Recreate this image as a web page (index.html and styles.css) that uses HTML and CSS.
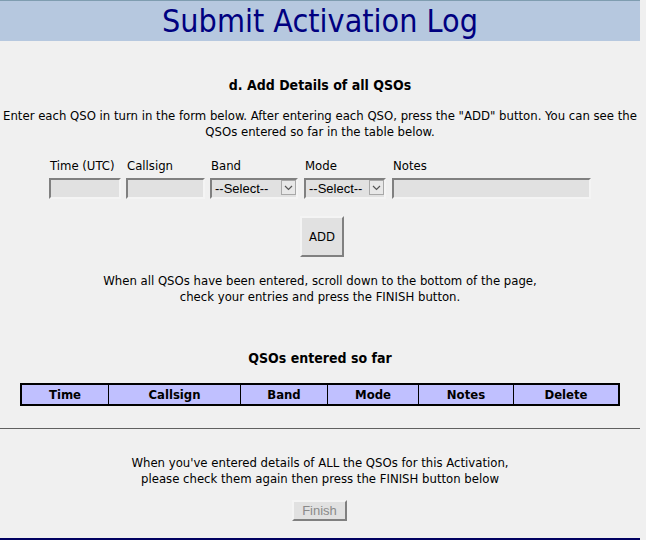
FILE: index.html
```html
<!DOCTYPE html>
<html lang="en">
<head>
    <meta charset="UTF-8">
    <title>Submit Activation Log</title>
    <link rel="stylesheet" href="styles.css">
</head>
<body>
<div class="page">

    <div class="banner">
        <h1>Submit Activation Log</h1>
    </div>

    <h3 class="step">d. Add Details of all QSOs</h3>
    <p class="intro">Enter each QSO in turn in the form below. After entering each QSO, press the "ADD" button. You can see the QSOs entered so far in the table below.</p>

    <form id="qsoForm" class="qso-form">
        <div class="fields">
            <div class="field f-time">
                <label for="time">Time (UTC)</label>
                <input type="text" id="time" name="time">
            </div>
            <div class="field f-call">
                <label for="callsign">Callsign</label>
                <input type="text" id="callsign" name="callsign">
            </div>
            <div class="field f-band">
                <label for="band">Band</label>
                <span class="select-wrap">
                    <select id="band" name="band">
                        <option>--Select--</option>
                    </select>
                    <span class="arrow"><svg width="9" height="6" viewBox="0 0 9 6"><path d="M1 1 L4.5 4.5 L8 1" fill="none" stroke="#555" stroke-width="1.2"/></svg></span>
                </span>
            </div>
            <div class="field f-mode">
                <label for="mode">Mode</label>
                <span class="select-wrap">
                    <select id="mode" name="mode">
                        <option>--Select--</option>
                    </select>
                    <span class="arrow"><svg width="9" height="6" viewBox="0 0 9 6"><path d="M1 1 L4.5 4.5 L8 1" fill="none" stroke="#555" stroke-width="1.2"/></svg></span>
                </span>
            </div>
            <div class="field f-notes">
                <label for="notes">Notes</label>
                <input type="text" id="notes" name="notes">
            </div>
        </div>
        <button type="button" class="add-btn">ADD</button>
    </form>

    <p class="hint">When all QSOs have been entered, scroll down to the bottom of the page,<br>check your entries and press the FINISH button.</p>

    <h3 class="so-far">QSOs entered so far</h3>

    <table class="qso-table">
        <tr>
            <th class="c-time">Time</th>
            <th class="c-call">Callsign</th>
            <th class="c-band">Band</th>
            <th class="c-mode">Mode</th>
            <th class="c-notes">Notes</th>
            <th class="c-del">Delete</th>
        </tr>
    </table>

    <hr>

    <p class="finish-note">When you've entered details of ALL the QSOs for this Activation,<br>please check them again then press the FINISH button below</p>

    <div class="finish-row">
        <button type="button" class="finish-btn" disabled>Finish</button>
    </div>

    <div class="footer-line"></div>
</div>
</body>
</html>
```

FILE: styles.css
```css
html, body {
    margin: 0;
    padding: 0;
    background-color: #f0f0f0;
}

body {
    font-family: "DejaVu Sans Condensed", "DejaVu Sans", sans-serif;
    font-size: 13px;
    color: #000;
}

.page {
    width: 640px;
    height: 540px;
    overflow: hidden;
}

.banner {
    background-color: #b6c8df;
    border-top: 1px solid #7f9db0;
    height: 40px;
}

h1 {
    margin: 0;
    text-align: center;
    font-weight: normal;
    font-size: 32px;
    line-height: 40px;
    color: #000080;
}

h3 {
    margin: 0;
    text-align: center;
    font-size: 14px;
}

.step {
    margin-top: 34px;
    line-height: 20px;
}

p {
    margin: 0;
    text-align: center;
    line-height: 16px;
}

.intro {
    margin-top: 13px;
}

.qso-form {
    margin-top: 18px;
}

.fields {
    display: flex;
    justify-content: center;
    gap: 5px;
}

.field label {
    display: block;
    line-height: 16px;
    margin-bottom: 4px;
    padding-left: 1px;
}

input, select {
    box-sizing: border-box;
    height: 21px;
    margin: 0;
    background-color: #e1e1e1;
    border: 2px solid;
    border-color: #808080 #f4f4f4 #f4f4f4 #808080;
    font-family: "Liberation Sans", Arial, sans-serif;
    font-size: 13px;
    padding: 0 4px;
    border-radius: 0;
}

.f-time input { width: 72px; }
.f-call input { width: 79px; }
.f-band select { width: 88px; }
.f-mode { margin-left: 1px; }
.f-mode select { width: 82px; }
.f-notes { margin-left: 1px; }
.f-notes input { width: 199px; }

.select-wrap {
    position: relative;
    display: block;
}

select {
    -webkit-appearance: none;
    appearance: none;
    color: #000;
    padding-left: 3px;
}

.arrow {
    position: absolute;
    right: 2px;
    top: 2px;
    width: 15px;
    height: 15px;
    border: 1px solid #a8a8a8;
    background-color: #e8e8e8;
    box-sizing: border-box;
    display: flex;
    align-items: center;
    justify-content: center;
    pointer-events: none;
}

.add-btn {
    display: block;
    margin: 17px 0 0 300px;
    width: 44px;
    height: 41px;
    padding: 0;
    box-sizing: border-box;
    background-color: #e1e1e1;
    border: 2px solid;
    border-color: #f4f4f4 #808080 #808080 #f4f4f4;
    font-family: "DejaVu Sans Condensed", sans-serif;
    font-size: 13px;
    color: #000;
}

.hint {
    margin-top: 16px;
}

.so-far {
    margin-top: 43px;
    line-height: 20px;
}

.qso-table {
    margin: 15px auto 0;
    width: 600px;
    border-collapse: collapse;
    border: 2px solid #000;
    background-color: #c0c0ff;
}

.qso-table th {
    border-left: 1px solid #000;
    font-size: 13px;
    line-height: 19px;
    height: 19px;
    padding: 0;
}

.qso-table th:first-child {
    border-left: none;
}

.c-time { width: 86px; }
.c-call { width: 131px; }
.c-band { width: 86px; }
.c-mode { width: 90px; }
.c-notes { width: 94px; }

hr {
    margin: 22px 0 0;
    border: none;
    border-top: 1px solid #606060;
    height: 0;
}

.finish-note {
    margin-top: 26px;
}

.finish-row {
    text-align: center;
    margin-top: 13px;
    padding-right: 1px;
}

.finish-btn {
    width: 55px;
    height: 21px;
    padding: 0;
    vertical-align: top;
    background-color: #e1e1e1;
    border: 2px solid;
    border-color: #f4f4f4 #808080 #808080 #f4f4f4;
    font-family: "Liberation Sans", Arial, sans-serif;
    font-size: 13px;
    color: #8a8a8a;
}

.footer-line {
    margin-top: 17px;
    border-top: 2px solid #000060;
}
```
